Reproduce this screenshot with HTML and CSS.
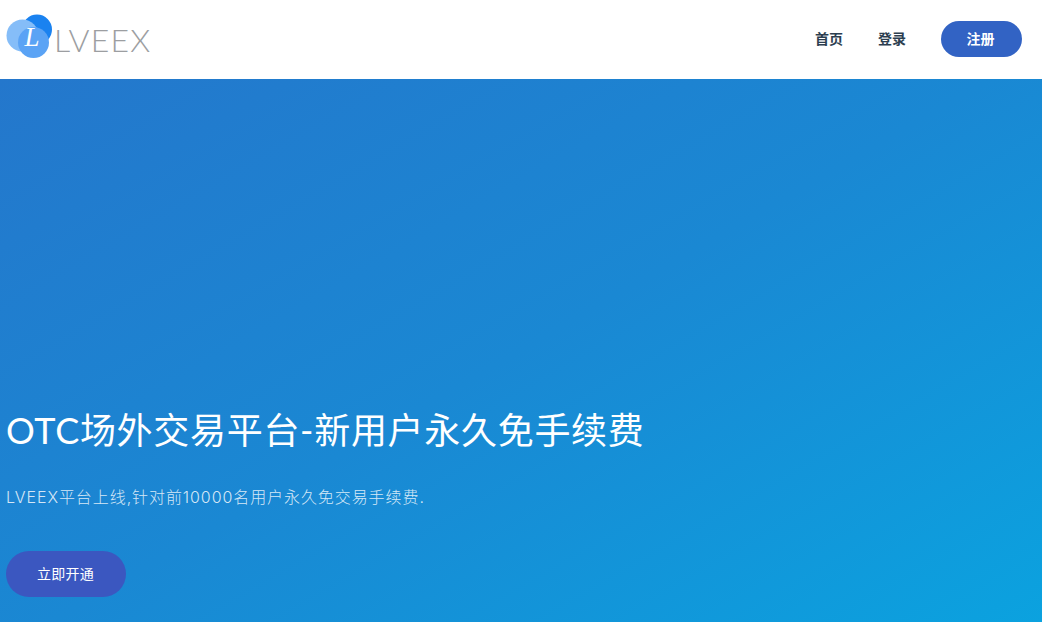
FILE: index.html
```html
<!DOCTYPE html>
<html lang="zh-CN">
    <head>
        <meta charset="UTF-8"/>
        <title>LVEEX</title>
        <link rel="stylesheet" href="styles.css">
    </head>
    <body>
        <header class="topbar">
          <a class="logo" href="#">
            <svg class="logo-mark" width="48" height="50" viewBox="0 0 48 50">
              <circle cx="31" cy="15.5" r="15" fill="#1a82f0"/>
              <circle cx="16.5" cy="21.5" r="16" fill="#85bdf8"/>
              <circle cx="27.5" cy="28.5" r="15.5" fill="#5aa3f5"/>
              <text class="logo-l" x="18.5" y="32">L</text>
            </svg>
            <span class="logo-text">LVEEX</span>
          </a>
          <nav class="nav">
            <a href="#">首页</a>
            <a href="#">登录</a>
            <a class="nav-register" href="#">注册</a>
          </nav>
        </header>
        <main class="hero">
          <h1>OTC场外交易平台-新用户永久免手续费</h1>
          <p>LVEEX平台上线,针对前10000名用户永久免交易手续费.</p>
          <a class="hero-btn" href="#">立即开通</a>
        </main>
    </body>
</html>
```

FILE: styles.css
```css
body {
  margin: 0;
  height: 622px;
  overflow: hidden;
  font-family: Lato, "Noto Sans CJK SC", sans-serif;
  display: flex;
  flex-direction: column;
}

a {
  text-decoration: none;
}

.topbar {
  height: 77px;
  flex: none;
  background: #fff;
  display: flex;
  justify-content: space-between;
  align-items: center;
  padding: 0 20px 2px 6px;
}

.logo {
  display: flex;
  align-items: center;
}

.logo-l {
  font-family: "Liberation Serif", serif;
  font-style: italic;
  font-size: 27px;
  fill: #fff;
}

.logo-text {
  padding-top: 2px;
  font-size: 32px;
  font-weight: 300;
  color: #9c9ea1;
  letter-spacing: 1.2px;
}

.nav {
  display: flex;
  align-items: center;
  gap: 35px;
}

.nav a {
  font-size: 14px;
  line-height: 17px;
  font-weight: 700;
  color: #2c3e50;
}

.nav .nav-register {
  width: 81px;
  height: 36px;
  padding-right: 2px;
  box-sizing: border-box;
  border-radius: 18px;
  background: #3263c4;
  color: #fff;
  display: flex;
  align-items: center;
  justify-content: center;
}

.hero {
  flex: 1;
  background: linear-gradient(150deg, #2477cc 0%, #1a88d3 50%, #0ba2df 100%);
  padding: 328px 6px 0;
  color: #fff;
}

.hero h1 {
  margin: 0;
  font-size: 36px;
  font-weight: 400;
  line-height: 46px;
  letter-spacing: 0.7px;
}

.hero p {
  margin: 32px 0 0;
  font-family: Inter, "Noto Sans CJK SC", sans-serif;
  font-size: 16px;
  font-weight: 300;
  line-height: 24px;
  letter-spacing: 0.92px;
  color: rgba(255, 255, 255, 0.82);
}

.hero-btn {
  margin-top: 42px;
  width: 120px;
  height: 46px;
  padding: 0 1px 2px 0;
  box-sizing: border-box;
  border-radius: 23px;
  background: #3b57c0;
  color: #fff;
  font-size: 14px;
  letter-spacing: 0.2px;
  display: flex;
  align-items: center;
  justify-content: center;
}
```
